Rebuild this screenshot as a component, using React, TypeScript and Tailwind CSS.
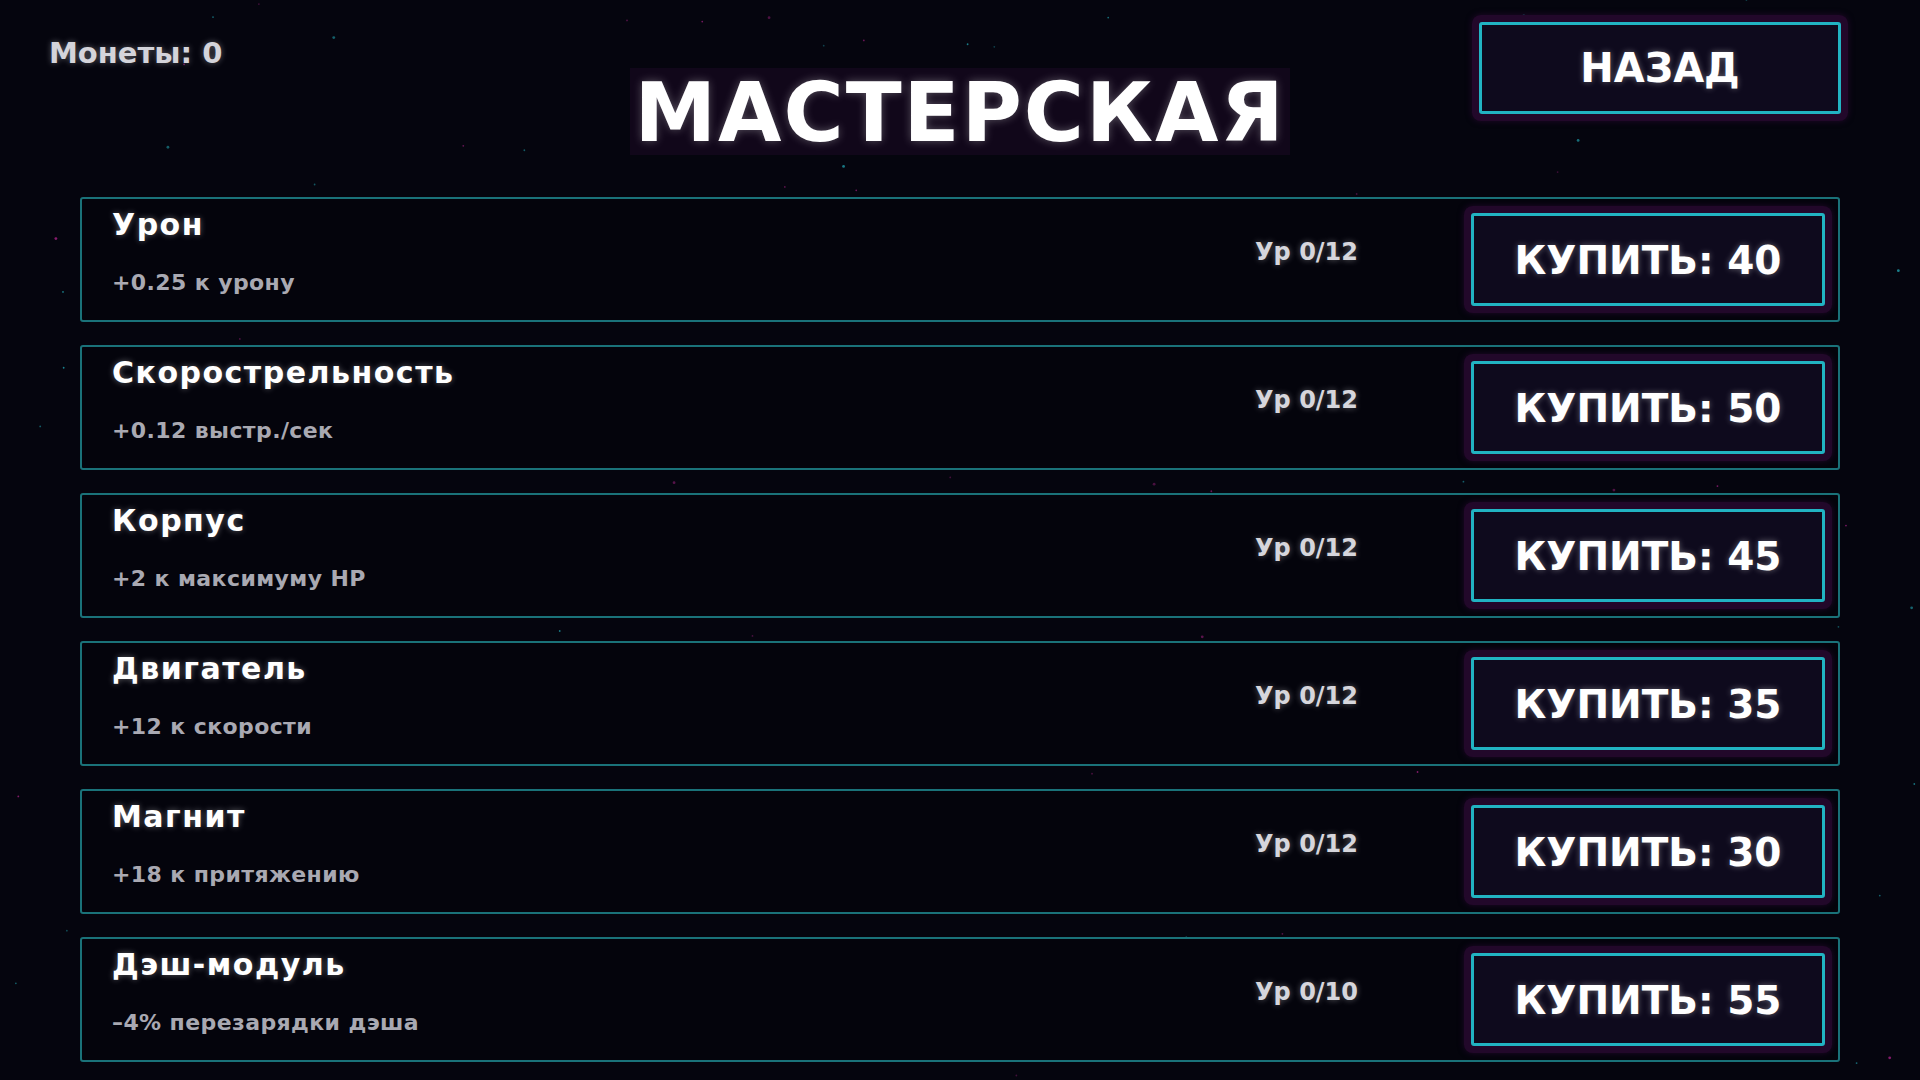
import React from 'react';

const upgrades = [
  { name: 'Урон', desc: '+0.25 к урону', level: 'Ур 0/12', price: 40 },
  { name: 'Скорострельность', desc: '+0.12 выстр./сек', level: 'Ур 0/12', price: 50 },
  { name: 'Корпус', desc: '+2 к максимуму HP', level: 'Ур 0/12', price: 45 },
  { name: 'Двигатель', desc: '+12 к скорости', level: 'Ур 0/12', price: 35 },
  { name: 'Магнит', desc: '+18 к притяжению', level: 'Ур 0/12', price: 30 },
  { name: 'Дэш-модуль', desc: '–4% перезарядки дэша', level: 'Ур 0/10', price: 55 },
];

// seeded random so the star field stays the same between renders
const makeRand = (seed: number) => () => {
  seed |= 0;
  seed = (seed + 0x6d2b79f5) | 0;
  let t = Math.imul(seed ^ (seed >>> 15), 1 | seed);
  t = (t + Math.imul(t ^ (t >>> 7), 61 | t)) ^ t;
  return ((t ^ (t >>> 14)) >>> 0) / 4294967296;
};

const rand = makeRand(42);
const stars = Array.from({ length: 170 }, () => ({
  x: rand() * 1920,
  y: rand() * 1080,
  r: rand() > 0.8 ? 1.4 : 0.9,
  pink: rand() > 0.55,
  o: 0.35 + rand() * 0.5,
}));

const StarField = () => (
  <svg className="absolute inset-0 h-full w-full pointer-events-none" viewBox="0 0 1920 1080" preserveAspectRatio="none">
    {stars.map((s, i) => (
      <circle key={i} cx={s.x} cy={s.y} r={s.r} fill={s.pink ? '#a0207f' : '#1f9aa6'} opacity={s.o} />
    ))}
  </svg>
);

const glowText = '[text-shadow:0_0_6px_rgba(255,255,255,0.35)]';

const UpgradeRow = ({ name, desc, level, price }: (typeof upgrades)[number]) => (
  <div className="flex h-[125px] items-start rounded-[3px] border-2 border-[#1a7279] bg-[#04040c]">
    <div className="flex-1 pl-[30px] pt-[8px]">
      <div className={`text-[30px] leading-[36px] tracking-[1.5px] text-white ${glowText}`}>{name}</div>
      <div className="mt-[27px] text-[22px] leading-[26px] tracking-[0.4px] text-[#a9a9b2]">{desc}</div>
    </div>
    <div className={`mt-[39px] text-[24px] leading-[28px] text-[#d6d6dc] ${glowText}`}>{level}</div>
    <button className="ml-[113px] mr-[13px] mt-[14px] flex h-[93px] w-[354px] items-center justify-center rounded-[3px] border-[3px] border-[#21b3c2] bg-[#0e0a1d] pt-1 text-[39px] text-white shadow-[0_0_0_7px_#22082a,0_0_6px_7px_rgba(60,10,70,0.5)]">
      <span className={glowText}>КУПИТЬ: {price}</span>
    </button>
  </div>
);

export default function App() {
  return (
    <div
      className="relative min-h-screen w-full overflow-hidden bg-[#05050e] font-bold"
      style={{ fontFamily: '"DejaVu Sans", "Liberation Sans", sans-serif' }}
    >
      <StarField />

      <div className="relative">
        <header className="grid grid-cols-[1fr_auto_1fr] items-start">
          <div className={`mt-[36px] pl-[49px] text-[29px] leading-[34px] text-[#d4d4da] ${glowText}`}>
            Монеты: 0
          </div>
          <h1 className="mt-[68px]">
            <span className="inline-block h-[87px] bg-[#11071a] px-[4px] text-[82px] leading-[90px] tracking-[2px] text-white [text-shadow:0_0_10px_rgba(255,255,255,0.3)]">
              МАСТЕРСКАЯ
            </span>
          </h1>
          <div className="flex justify-end pr-[79px]">
            <button className="mt-[22px] flex h-[92px] w-[362px] items-center justify-center rounded-[3px] border-[3px] border-[#21b3c2] bg-[#0e0a1d] text-[40px] text-white shadow-[0_0_0_7px_#22082a,0_0_6px_7px_rgba(60,10,70,0.5)]">
              <span className={glowText}>НАЗАД</span>
            </button>
          </div>
        </header>

        <div className="mx-[80px] mt-[42px] flex flex-col gap-[23px]">
          {upgrades.map((u) => (
            <UpgradeRow key={u.name} {...u} />
          ))}
        </div>
      </div>
    </div>
  );
}
